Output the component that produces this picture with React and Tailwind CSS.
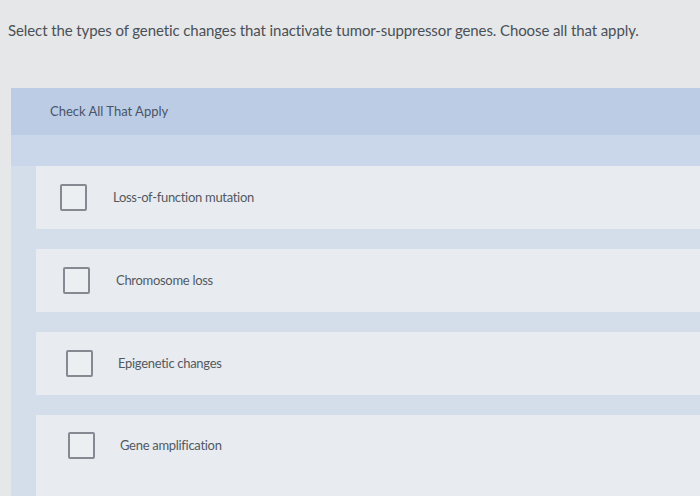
const options = [
    { label: 'Loss-of-function mutation', box: 'ml-[24px]', text: 'ml-[26px]' },
    { label: 'Chromosome loss', box: 'ml-[27px]', text: 'ml-[26px]' },
    { label: 'Epigenetic changes', box: 'ml-[30px]', text: 'ml-[25px]' },
    { label: 'Gene amplification', box: 'ml-[32px]', text: 'ml-[25px]' },
];

export default function App() {
    return (
        <div className="h-[496px] w-[700px] overflow-hidden bg-[#e5e7e8] font-['Lato',sans-serif] text-[#4b5057]">
            <p className="pl-[8px] pt-[21px] text-[15px] leading-[19px] tracking-[-0.1px]">
                Select the types of genetic changes that inactivate tumor-suppressor genes. Choose all that apply.
            </p>

            <div className="ml-[11px] mt-[48px] bg-[#d4ddea] pb-[10px]">
                <div className="flex h-[47px] items-center bg-[#bccce5] pl-[39px] text-[13px] text-[#4a5468]">
                    Check All That Apply
                </div>
                <div className="h-[31px] bg-[#cad7ea]" />
                <div className="grid gap-[20px] pl-[25px]">
                    {options.map((option, index) => (
                        <div
                            key={option.label}
                            className={`flex bg-[#e8ecf1] ${index === 3 ? 'h-[84px] items-start pt-[17px]' : 'h-[63px] items-center'}`}
                        >
                            <span className={`h-[27px] w-[27px] shrink-0 rounded-[2px] border-2 border-[#858a92] bg-[#eceff2] ${option.box}`} />
                            <span className={`text-[13px] leading-[27px] tracking-[-0.3px] text-[#545960] ${option.text}`}>{option.label}</span>
                        </div>
                    ))}
                </div>
            </div>
        </div>
    );
}
